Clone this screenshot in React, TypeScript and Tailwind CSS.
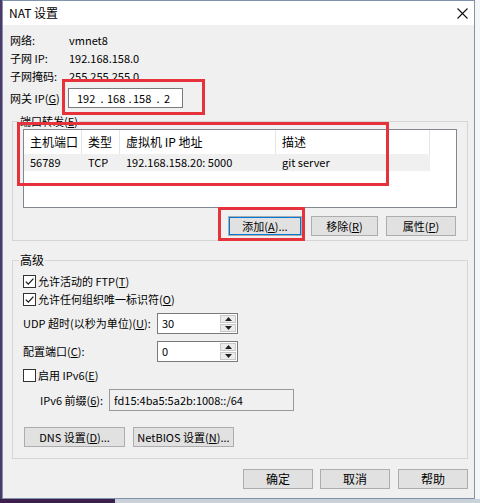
import React from "react"

function Check({ checked }: { checked?: boolean }) {
  return (
    <span className="flex h-[13px] w-[13px] shrink-0 items-center justify-center border border-[#333] bg-white">
      {checked && (
        <svg width="11" height="11" viewBox="0 0 11 11">
          <path d="M1.8 5.6 L4.3 8.1 L9.4 2.6" fill="none" stroke="#1a1a1a" strokeWidth="1.3" />
        </svg>
      )}
    </span>
  )
}

function Btn({ children, className = "" }: { children: React.ReactNode; className?: string }) {
  return (
    <div className={`flex h-[20px] items-center justify-center whitespace-nowrap border border-[#adadad] bg-[#e1e1e1] ${className}`}>
      {children}
    </div>
  )
}

function Spin({ value }: { value: string }) {
  return (
    <div className="flex h-[21px] w-[81px] border border-[#7a7a7a] bg-white">
      <div className="flex-1 pl-[4px] leading-[19px]">{value}</div>
      <div className="flex w-[17px] flex-col gap-[1px] py-[1px] pr-[1px]">
        <div className="flex flex-1 items-center justify-center border border-[#c8c8c8] bg-[#ececec]">
          <svg width="7" height="4" viewBox="0 0 7 4"><path d="M0 4 L3.5 0 L7 4Z" fill="#222" /></svg>
        </div>
        <div className="flex flex-1 items-center justify-center border border-[#c8c8c8] bg-[#ececec]">
          <svg width="7" height="4" viewBox="0 0 7 4"><path d="M0 0 L3.5 4 L7 0Z" fill="#222" /></svg>
        </div>
      </div>
    </div>
  )
}

const columns = [
  { title: "主机端口", value: "56789", w: "w-[58px]" },
  { title: "类型", value: "TCP", w: "w-[38px]" },
  { title: "虚拟机 IP 地址", value: "192.168.158.20: 5000", w: "w-[156px]" },
  { title: "描述", value: "git server", w: "w-[154px]" },
]

export default function App() {
  return (
    <div className="relative h-[503px] w-[480px] overflow-hidden whitespace-nowrap bg-[#eef1f5] font-['Noto_Sans_CJK_SC',sans-serif] text-[11px] text-black">
      <div className="flex">
        <div className="h-[499px] w-[2px] bg-[#4b3a68]" />
        <div className="flex h-[499px] w-[473px] flex-col border border-[#8193aa]">
          {/* title bar */}
          <div className="flex h-[24px] items-center justify-between bg-white pl-[6px] pr-[6px]">
            <span className="text-[12px] leading-[16px]">NAT 设置</span>
            <svg width="11" height="11" viewBox="0 0 11 11">
              <path d="M0.5 0.5 L10.5 10.5 M10.5 0.5 L0.5 10.5" stroke="#111" strokeWidth="1.1" />
            </svg>
          </div>

          <div className="flex flex-1 flex-col bg-[#f0f0f0] pl-[7px]">
            {/* info */}
            <div className="mt-[6px] grid grid-cols-[59px_auto] leading-[18px]">
              <span>网络:</span>
              <span>vmnet8</span>
              <span>子网 IP:</span>
              <span>192.168.158.0</span>
              <span>子网掩码:</span>
              <span>255.255.255.0</span>
            </div>
            <div className="mt-[3px] flex h-[20px] items-center">
              <span className="w-[58px]">
                网关 IP(<u>G</u>)
              </span>
              <div className="flex h-[20px] w-[115px] items-center border border-[#7a7a7a] bg-white pl-[8px] leading-[18px]">
                <span className="w-[20px]">192</span>
                <span className="w-[10px] text-center">.</span>
                <span className="w-[20px]">168</span>
                <span className="w-[6px] text-center">.</span>
                <span className="w-[21px]">158</span>
                <span className="w-[8px] text-center">.</span>
                <span className="pl-[2px]">2</span>
              </div>
            </div>

            {/* port forwarding */}
            <fieldset className="ml-[2px] mt-[5px] w-[456px] border border-[#d5d5d5]">
              <legend className="ml-[6px] px-[1px] leading-[16px]">
                端口转发(<u>E</u>)
              </legend>
              <div className="px-[10px] pb-[4px]">
                <div className="h-[79px] w-[434px] border border-[#828790] bg-white">
                  <div className="flex h-[24px]">
                    {columns.map((c, i) => (
                      <div key={i} className={`${c.w} border-r border-[#e5e5e5] pl-[6px] text-[12px] leading-[24px]`}>
                        {c.title}
                      </div>
                    ))}
                  </div>
                  <div className="flex h-[17px] w-[406px] bg-[#f0f0f0]">
                    {columns.map((c, i) => (
                      <div key={i} className={`${c.w} pl-[6px] leading-[17px]`}>
                        {c.value}
                      </div>
                    ))}
                  </div>
                </div>
                <div className="mt-[8px] flex justify-end pr-[1px]">
                  <Btn className="w-[74px] border-[#0078d7] shadow-[inset_0_0_0_1px_#0078d7]">
                    添加(<u>A</u>)...
                  </Btn>
                  <Btn className="ml-[9px] w-[67px]">
                    移除(<u>R</u>)
                  </Btn>
                  <Btn className="ml-[8px] w-[70px]">
                    属性(<u>P</u>)
                  </Btn>
                </div>
              </div>
            </fieldset>

            {/* advanced */}
            <fieldset className="ml-[2px] mt-[11px] w-[456px] border border-[#d5d5d5]">
              <legend className="ml-[6px] px-[1px] text-[12px] leading-[16px]">高级</legend>
              <div className="pl-[10px] pb-[11px]">
                <div className="mt-[4px] flex h-[18px] items-center gap-[2px]">
                  <Check checked />
                  <span>
                    允许活动的 FTP(<u>T</u>)
                  </span>
                </div>
                <div className="flex h-[18px] items-center gap-[2px]">
                  <Check checked />
                  <span>
                    允许任何组织唯一标识符(<u>O</u>)
                  </span>
                </div>
                <div className="mt-[5px] flex h-[21px] items-center">
                  <span className="w-[134px]">
                    UDP 超时(以秒为单位)(<u>U</u>):
                  </span>
                  <Spin value="30" />
                </div>
                <div className="mt-[7px] flex h-[21px] items-center">
                  <span className="w-[134px]">
                    配置端口(<u>C</u>):
                  </span>
                  <Spin value="0" />
                </div>
                <div className="mt-[4px] flex h-[18px] items-center gap-[2px]">
                  <Check />
                  <span>
                    启用 IPv6(<u>E</u>)
                  </span>
                </div>
                <div className="mt-[5px] flex h-[22px] items-center pl-[17px]">
                  <span className="w-[69px]">
                    IPv6 前缀(<u>6</u>):
                  </span>
                  <div className="h-[22px] w-[185px] border border-[#9a9a9a] bg-[#f0f0f0] pl-[4px] leading-[20px]">
                    fd15:4ba5:5a2b:1008::/64
                  </div>
                </div>
                <div className="ml-[1px] mt-[16px] flex gap-[8px]">
                  <Btn className="w-[101px]">
                    DNS 设置(<u>D</u>)...
                  </Btn>
                  <Btn className="w-[101px]">
                    NetBIOS 设置(<u>N</u>)...
                  </Btn>
                </div>
              </div>
            </fieldset>

            {/* dialog buttons */}
            <div className="mt-[10px] flex justify-end pr-[6px]">
              <Btn className="w-[70px] text-[12px]">确定</Btn>
              <Btn className="ml-[7px] w-[70px] text-[12px]">取消</Btn>
              <Btn className="ml-[8px] w-[70px] text-[12px]">帮助</Btn>
            </div>
          </div>
        </div>
        <div className="flex-1 bg-[#f4f6f8]" />
      </div>
      <div className="flex h-[4px]">
        <div className="w-[115px] bg-[#3d1f4e]" />
        <div className="flex-1 bg-[#c9d1db]" />
      </div>

      {/* red highlight boxes */}
      <div className="pointer-events-none absolute left-[62px] top-[79px] h-[36px] w-[143px] border-[3px] border-[#e5323b]" />
      <div className="pointer-events-none absolute left-[17px] top-[122px] h-[64px] w-[372px] border-[3px] border-[#e5323b]" />
      <div className="pointer-events-none absolute left-[218px] top-[207px] h-[34px] w-[87px] border-[3px] border-[#e5323b]" />
    </div>
  )
}
